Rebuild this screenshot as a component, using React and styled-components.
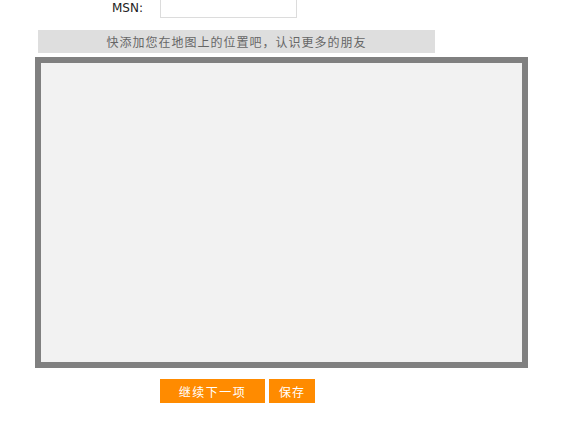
import React, { useState } from "react";
import styled, { createGlobalStyle } from "styled-components";

const GlobalStyle = createGlobalStyle`
  html, body {
    margin: 0;
    padding: 0;
    background: #ffffff;
  }
  body {
    font-family: "DejaVu Sans", Verdana, "Noto Sans CJK SC", sans-serif;
    font-size: 12px;
    color: #333;
  }
`;

const Page = styled.div`
  width: 580px;
  margin-top: -3px;
`;

const FieldRow = styled.div`
  display: grid;
  grid-template-columns: 143px 137px;
  column-gap: 17px;
  align-items: center;
`;

const Label = styled.label`
  text-align: right;
  color: #222;
  font-size: 12px;
`;

const TextInput = styled.input`
  box-sizing: border-box;
  width: 137px;
  height: 21px;
  margin: 0;
  border: 1px solid #dcdcdc;
  background: #fff;
  outline: none;
  font: inherit;
  padding: 0 4px;
`;

const Hint = styled.div`
  box-sizing: border-box;
  width: 397px;
  height: 23px;
  margin: 12px 0 0 38px;
  background: #dedede;
  color: #666;
  font-family: "Noto Sans CJK SC", "DejaVu Sans", sans-serif;
  font-size: 12px;
  letter-spacing: 1px;
  line-height: 23px;
  text-align: center;
`;

const MapFrame = styled.div`
  box-sizing: border-box;
  width: 493px;
  height: 311px;
  margin: 4px 0 0 35px;
  border: 6px solid #808080;
  background: #f2f2f2;
`;

const Actions = styled.div`
  display: flex;
  gap: 4px;
  margin: 11px 0 0 160px;
`;

const OrangeButton = styled.button`
  box-sizing: border-box;
  width: ${(p) => p.$width}px;
  height: 24px;
  padding: 0;
  border: none;
  background: #ff8b00;
  color: #fff;
  font-family: "Noto Sans CJK SC", "DejaVu Sans", sans-serif;
  font-size: 12px;
  letter-spacing: ${(p) => p.$spacing}px;
  cursor: pointer;
`;

export default function App() {
  const [msn, setMsn] = useState("");

  return (
    <>
      <GlobalStyle />
      <Page>
        <FieldRow>
          <Label htmlFor="msn">MSN:</Label>
          <TextInput
            id="msn"
            type="text"
            value={msn}
            onChange={(e) => setMsn(e.target.value)}
          />
        </FieldRow>
        <Hint>快添加您在地图上的位置吧，认识更多的朋友</Hint>
        <MapFrame />
        <Actions>
          <OrangeButton $width={105} $spacing={1.5}>
            继续下一项
          </OrangeButton>
          <OrangeButton $width={46} $spacing={1}>
            保存
          </OrangeButton>
        </Actions>
      </Page>
    </>
  );
}
